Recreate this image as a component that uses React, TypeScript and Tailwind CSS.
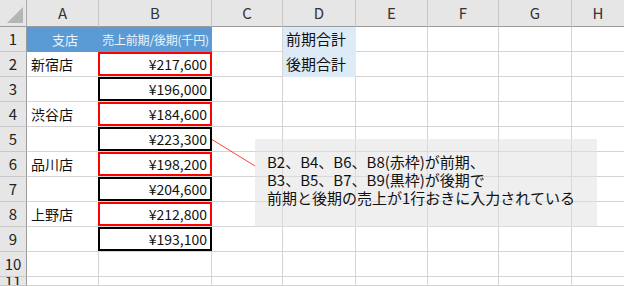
import React from "react";

const FONT = { fontFamily: '"Noto Sans CJK JP", "Noto Sans", sans-serif' };

const letters = ["A", "B", "C", "D", "E", "F", "G", "H"];

type RowData = { a?: string; b?: string; d?: string };
const rows: RowData[] = [
  { a: "支店", b: "売上前期/後期(千円)", d: "前期合計" },
  { a: "新宿店", b: "¥217,600", d: "後期合計" },
  { b: "¥196,000" },
  { a: "渋谷店", b: "¥184,600" },
  { b: "¥223,300" },
  { a: "品川店", b: "¥198,200" },
  { b: "¥204,600" },
  { a: "上野店", b: "¥212,800" },
  { b: "¥193,100" },
  {},
  {},
];

export default function App() {
  return (
    <div className="relative w-[624px] h-[286px] overflow-hidden bg-white text-[14px] text-[#111]" style={FONT}>
      <div className="grid h-full grid-cols-[27px_72px_113px_71px_73px_72px_71px_73px_1fr] grid-rows-[27px_repeat(10,25px)_1fr]">
        {/* header row */}
        <div className="relative bg-[#e6e6e6] border-r border-b border-r-[#a9a9a9] border-b-[#9b9b9b]">
          <svg className="absolute right-[3px] bottom-[3px]" width="16" height="16" viewBox="0 0 16 16">
            <polygon points="16,0 16,16 0,16" fill="#b5b5b5" />
          </svg>
        </div>
        {letters.map((l, i) => (
          <div
            key={l}
            className={`flex items-center justify-center bg-[#e6e6e6] border-b border-b-[#9b9b9b] text-[15px] text-[#333] ${i < 7 ? "border-r border-r-[#c8c8c8]" : ""}`}
          >
            {l}
          </div>
        ))}
        {rows.map((r, idx) => {
          const n = idx + 1;
          const isBlueHead = n === 1;
          const isBBox = n >= 2 && n <= 9;
          const red = isBBox && n % 2 === 0;
          const blueD = n === 1 || n === 2;
          return (
            <React.Fragment key={n}>
              <div className="flex items-center justify-center bg-[#e6e6e6] border-r border-b border-r-[#9b9b9b] border-b-[#c8c8c8] text-[15px] text-[#222] overflow-hidden">
                {n}
              </div>
              {/* A */}
              {isBlueHead ? (
                <div className="flex items-center justify-center bg-[#5b9bd5] text-[13px] text-[#eef3fb] pl-1">{r.a}</div>
              ) : (
                <div className="flex items-center pl-[4px] border-r border-b border-[#d4d4d4]">{r.a}</div>
              )}
              {/* B */}
              {isBlueHead ? (
                <div className="flex items-center justify-center bg-[#5b9bd5] text-[12px] tracking-[-0.2px] text-[#eef3fb] whitespace-nowrap">
                  {r.b}
                </div>
              ) : isBBox ? (
                <div className="border-b border-[#d4d4d4] ml-[-1px]">
                  <div className={`h-full flex items-center justify-end pr-[3px] border-2 ${red ? "border-[#ff0000]" : "border-black"}`}>
                    {r.b}
                  </div>
                </div>
              ) : (
                <div className="border-r border-b border-[#d4d4d4]" />
              )}
              {/* C */}
              <div className="border-r border-b border-[#d4d4d4]" />
              {/* D */}
              {blueD ? (
                <div className="flex items-center pl-[3px] bg-[#ddebf7] text-[15px]">{r.d}</div>
              ) : (
                <div className="border-r border-b border-[#d4d4d4]" />
              )}
              {/* E-H */}
              <div className="border-r border-b border-[#d4d4d4]" />
              <div className="border-r border-b border-[#d4d4d4]" />
              <div className="border-r border-b border-[#d4d4d4]" />
              <div className="border-b border-[#d4d4d4]" />
            </React.Fragment>
          );
        })}
      </div>

      {/* connector line */}
      <svg className="absolute left-[211px] top-[137px]" width="46" height="32" viewBox="0 0 46 32">
        <line x1="1" y1="2.5" x2="44" y2="29" stroke="#ff4040" strokeWidth="1" />
      </svg>

      {/* callout */}
      <div className="absolute left-[255px] top-[139px] w-[342px] h-[88px] bg-[#dfdfdf]/50 pl-[12px] pt-[14px] text-[15px] leading-[18px] text-[#111]">
        <div>B2、B4、B6、B8(赤枠)が前期、</div>
        <div>B3、B5、B7、B9(黒枠)が後期で</div>
        <div>前期と後期の売上が1行おきに入力されている</div>
      </div>
    </div>
  );
}
